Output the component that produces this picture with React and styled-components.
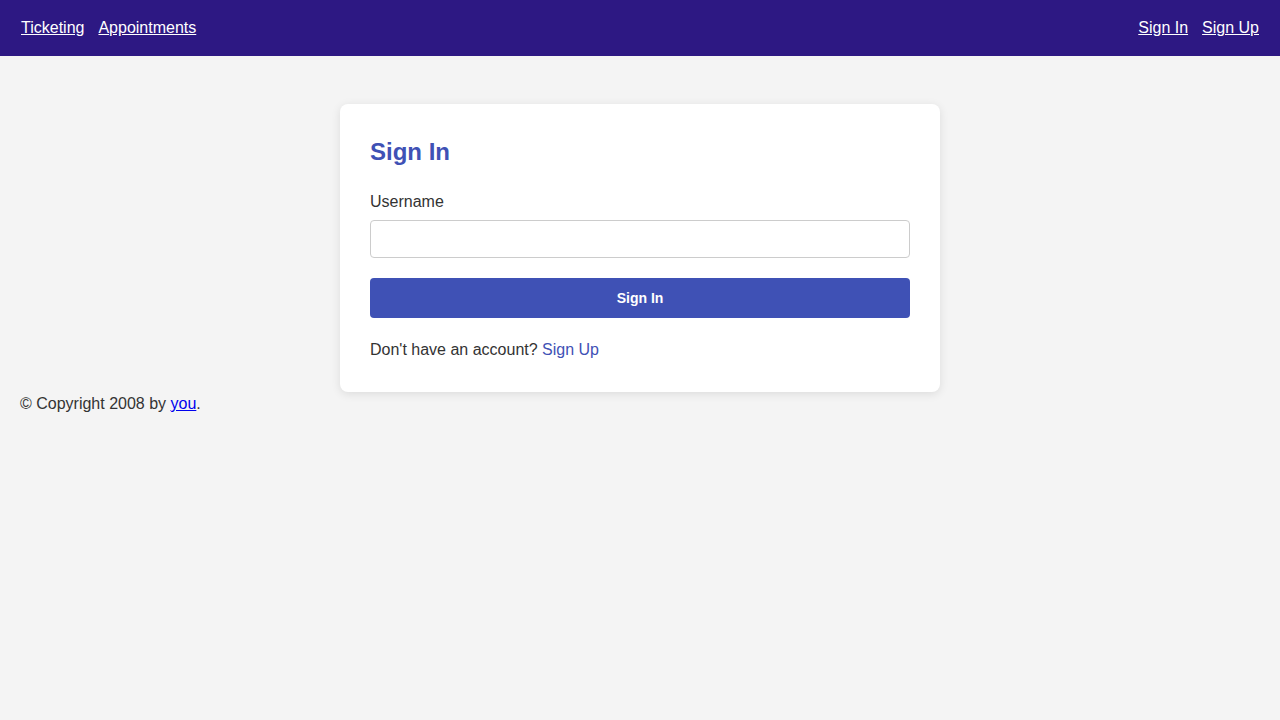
import React from "react";
import styled, { createGlobalStyle } from "styled-components";

const Global = createGlobalStyle`
  html, body { margin: 0; padding: 0; }
  body {
    background: #f4f4f4;
    font-family: "Liberation Sans", Arial, sans-serif;
    font-size: 16px;
    color: #333;
  }
`;

const Header = styled.header`
  height: 56px;
  background: #2d1883;
  display: flex;
  align-items: center;
  justify-content: space-between;
  padding: 0 21px;
`;

const NavGroup = styled.nav`
  display: flex;
  gap: 14px;
`;

const NavLink = styled.a`
  color: #fff;
  text-decoration: underline;
  font-size: 16px;
`;

const Main = styled.main`
  display: flex;
  justify-content: center;
  padding-top: 48px;
`;

const Card = styled.div`
  width: 600px;
  box-sizing: border-box;
  background: #fff;
  border-radius: 8px;
  padding: 30px;
  box-shadow: 0 2px 10px rgba(0, 0, 0, 0.1);
`;

const Title = styled.h2`
  margin: 0 0 23px;
  font-size: 24px;
  line-height: 36px;
  font-weight: bold;
  color: #3f51b5;
`;

const Label = styled.label`
  display: block;
  font-size: 16px;
  line-height: 18px;
  margin-bottom: 9px;
`;

const Input = styled.input`
  display: block;
  width: 100%;
  box-sizing: border-box;
  height: 38px;
  border: 1px solid #ccc;
  border-radius: 4px;
  padding: 8px 10px;
  font-size: 16px;
  font-family: inherit;
  margin-bottom: 20px;
`;

const Button = styled.button`
  display: block;
  width: 100%;
  height: 40px;
  border: none;
  border-radius: 4px;
  background: #3f51b5;
  color: #fff;
  font-family: "Liberation Sans", Arial, sans-serif;
  font-size: 14px;
  font-weight: bold;
  cursor: pointer;
`;

const Note = styled.p`
  margin: 20px 0 0;
  line-height: 24px;
`;

const AccentLink = styled.a`
  color: #3f51b5;
  text-decoration: none;
`;

const Footer = styled.footer`
  padding: 0 20px;
  line-height: 24px;
`;

const FooterLink = styled.a`
  color: #0000ee;
  text-decoration: underline;
`;

export default function App() {
  return (
    <>
      <Global />
      <Header>
        <NavGroup>
          <NavLink href="#">Ticketing</NavLink>
          <NavLink href="#">Appointments</NavLink>
        </NavGroup>
        <NavGroup>
          <NavLink href="#">Sign In</NavLink>
          <NavLink href="#">Sign Up</NavLink>
        </NavGroup>
      </Header>
      <Main>
        <Card>
          <Title>Sign In</Title>
          <Label htmlFor="username">Username</Label>
          <Input id="username" type="text" />
          <Button>Sign In</Button>
          <Note>
            Don't have an account? <AccentLink href="#">Sign Up</AccentLink>
          </Note>
        </Card>
      </Main>
      <Footer>
        © Copyright 2008 by <FooterLink href="#">you</FooterLink>.
      </Footer>
    </>
  );
}
